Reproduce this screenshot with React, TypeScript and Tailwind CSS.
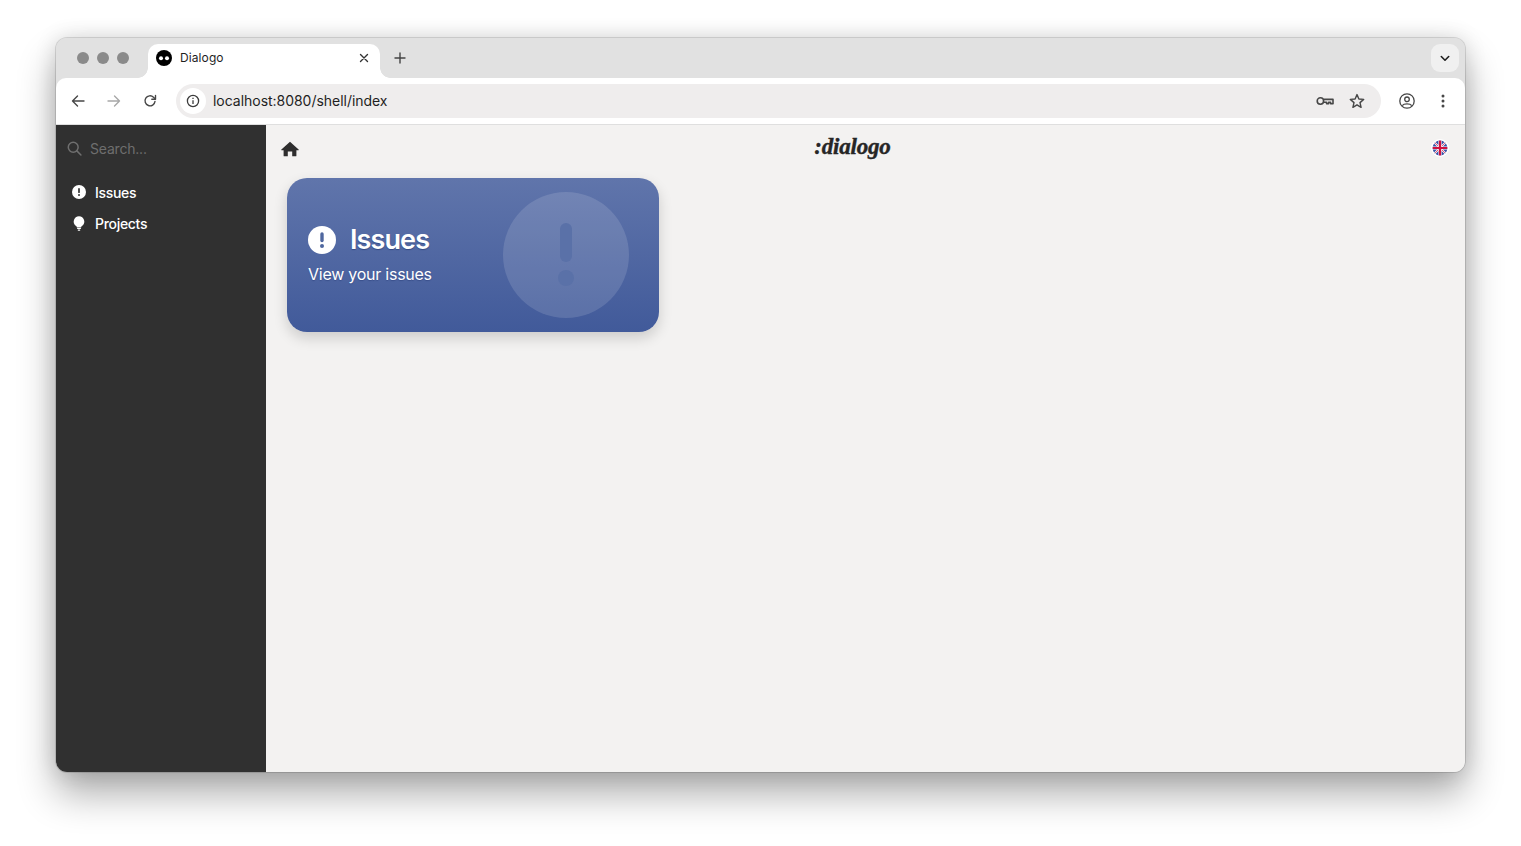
import React from "react";

function AlertCircle({ size, fg, bg }: { size: number; fg: string; bg: string }) {
  return (
    <svg width={size} height={size} viewBox="0 0 28 28" className="shrink-0">
      <circle cx="14" cy="14" r="14" fill={bg} />
      <rect x="12.3" y="6.2" width="3.4" height="10" rx="1.7" fill={fg} />
      <circle cx="14" cy="20" r="2" fill={fg} />
    </svg>
  );
}

function Favicon() {
  return (
    <svg width="16" height="16" viewBox="0 0 16 16" className="shrink-0">
      <circle cx="8" cy="8" r="8" fill="#000" />
      <circle cx="5" cy="8.2" r="2" fill="#fff" />
      <circle cx="11" cy="8.2" r="2" fill="#fff" />
    </svg>
  );
}

function Flag() {
  return (
    <svg width="18" height="18" viewBox="0 0 18 18" className="shrink-0">
      <circle cx="9" cy="9" r="9" fill="#fff" />
      <clipPath id="flag">
        <circle cx="9" cy="9" r="7.4" />
      </clipPath>
      <g clipPath="url(#flag)">
        <rect x="1" y="1" width="16" height="16" fill="#3a55a8" />
        <path d="M2 2 16 16M16 2 2 16" stroke="#fff" strokeWidth="1.8" />
        <path d="M2 2 16 16M16 2 2 16" stroke="#d8325a" strokeWidth="0.8" />
        <path d="M9 1V17M1 9H17" stroke="#fff" strokeWidth="3.2" />
        <path d="M9 1V17M1 9H17" stroke="#d0103f" strokeWidth="2.2" />
      </g>
    </svg>
  );
}

export default function App() {
  return (
    <div className="w-[1521px] h-[846px] bg-white overflow-hidden pt-[38px] pl-[56px] font-['Inter',sans-serif]">
      <div className="w-[1409px] h-[734px] rounded-[11px] overflow-hidden flex flex-col bg-[#e1e1e1] shadow-[0_0_0_1px_rgba(0,0,0,0.12),0_22px_38px_rgba(0,0,0,0.32),0_0_22px_rgba(0,0,0,0.14)]">
        {/* Tab strip */}
        <div className="h-[40px] shrink-0 flex items-start pr-[6px] bg-[#e1e1e1]">
          <div className="flex items-center gap-[8px] ml-[21px] h-[40px]">
            <span className="w-[12px] h-[12px] rounded-full bg-[#8a8a8a]" />
            <span className="w-[12px] h-[12px] rounded-full bg-[#8a8a8a]" />
            <span className="w-[12px] h-[12px] rounded-full bg-[#8a8a8a]" />
          </div>
          <div className="relative ml-[19px] mt-[6px] w-[232px] h-[34px] bg-white rounded-t-[10px] flex items-center pl-[8px] pr-[11px] pb-[6px] gap-[8px]">
            <span className="absolute -left-[10px] bottom-0 w-[10px] h-[10px] bg-[radial-gradient(circle_at_0_0,transparent_9.5px,#ffffff_10px)]" />
            <span className="absolute -right-[10px] bottom-0 w-[10px] h-[10px] bg-[radial-gradient(circle_at_100%_0,transparent_9.5px,#ffffff_10px)]" />
            <Favicon />
            <span className="text-[12px] text-[#1f1f1f] flex-1 font-['Inter',sans-serif] tracking-[0.1px]">Dialogo</span>
            <svg width="10" height="10" viewBox="0 0 10 10" fill="none" stroke="#333" strokeWidth="1.4" strokeLinecap="round">
              <path d="M1.5 1.5 8.5 8.5M8.5 1.5 1.5 8.5" />
            </svg>
          </div>
          <div className="ml-[14px] h-[40px] flex items-center">
            <svg width="12" height="12" viewBox="0 0 12 12" fill="none" stroke="#444" strokeWidth="1.4" strokeLinecap="round">
              <path d="M6 1V11M1 6H11" />
            </svg>
          </div>
          <div className="ml-auto mt-[6px] w-[28px] h-[28px] rounded-[9px] bg-[#f0f0f0] flex items-center justify-center">
            <svg width="10" height="7" viewBox="0 0 10 7" fill="none" stroke="#1f1f1f" strokeWidth="1.6" strokeLinecap="round" strokeLinejoin="round">
              <path d="M1.3 1.5 5 5.2 8.7 1.5" />
            </svg>
          </div>
        </div>

        {/* Toolbar */}
        <div className="h-[47px] shrink-0 bg-white rounded-t-[10px] border-b border-[#dfdfdf] flex items-center pl-[15px] pr-[20px]">
          <svg width="14" height="14" viewBox="0 0 14 14" fill="none" stroke="#474747" strokeWidth="1.4" strokeLinecap="round" strokeLinejoin="round">
            <path d="M13 7H1.5M6.5 2 1.5 7l5 5" />
          </svg>
          <svg className="ml-[22px]" width="14" height="14" viewBox="0 0 14 14" fill="none" stroke="#a8a8a8" strokeWidth="1.4" strokeLinecap="round" strokeLinejoin="round">
            <path d="M1 7H12.5M7.5 2l5 5-5 5" />
          </svg>
          <svg className="ml-[22px]" width="14" height="14" viewBox="0 0 14 14" fill="none" stroke="#474747" strokeWidth="1.4" strokeLinecap="round" strokeLinejoin="round">
            <path d="M12 7.4A5 5 0 1 1 10.5 3.2L12.3 5" />
            <path d="M12.5 1.4V5.2H8.8" />
          </svg>
          <div className="ml-[19px] w-[1205px] h-[34px] rounded-full bg-[#efeded] flex items-center pl-[4px] pr-[16px]">
            <div className="w-[26px] h-[26px] rounded-full bg-white flex items-center justify-center shrink-0">
              <svg width="14" height="14" viewBox="0 0 14 14" fill="none" stroke="#3c3c3c" strokeWidth="1.3">
                <circle cx="7" cy="7" r="5.6" />
                <path d="M7 6.3V10M7 3.8V5" />
              </svg>
            </div>
            <span className="ml-[7px] -mt-px text-[14px] text-[#1f1f1f] flex-1 tracking-[-0.03px]">localhost:8080/shell/index</span>
            <svg width="18" height="11" viewBox="0 0 18 11" fill="none" stroke="#474747" strokeWidth="1.6">
              <circle cx="4.4" cy="5" r="3.2" />
              <path d="M7.6 3.4H17V7.8H14.6V6.2H12.6V7.8H10.6V6.2H7.6" strokeLinejoin="round" />
            </svg>
            <svg className="ml-[15px]" width="16" height="16" viewBox="0 0 16 16" fill="none" stroke="#474747" strokeWidth="1.4" strokeLinejoin="round">
              <path d="M8 1.6 9.9 6 14.7 6.4 11 9.6 12.1 14.3 8 11.8 3.9 14.3 5 9.6 1.3 6.4 6.1 6Z" />
            </svg>
          </div>
          <svg className="ml-[18px]" width="16" height="16" viewBox="0 0 16 16" fill="none" stroke="#474747" strokeWidth="1.3">
            <circle cx="8" cy="8" r="7.2" />
            <circle cx="8" cy="6.3" r="2.3" />
            <path d="M3.2 12.6C5 10.4 11 10.4 12.8 12.6" />
          </svg>
          <svg className="ml-auto" width="4" height="14" viewBox="0 0 4 14" fill="#474747">
            <circle cx="2" cy="2" r="1.5" />
            <circle cx="2" cy="7" r="1.5" />
            <circle cx="2" cy="12" r="1.5" />
          </svg>
        </div>

        {/* Page */}
        <div className="flex-1 min-h-0 flex">
          <aside className="w-[210px] shrink-0 bg-[#303030] pt-[14px]">
            <div className="flex items-center pl-[11px] h-[18px]">
              <svg width="15" height="15" viewBox="0 0 14 14" fill="none" stroke="#6f6f6f" strokeWidth="1.4" strokeLinecap="round">
                <circle cx="5.8" cy="5.8" r="4.6" />
                <path d="M9.2 9.2 13 13" />
              </svg>
              <span className="ml-[8px] text-[14px] text-[#6e6e6e] tracking-[-0.2px]">Search...</span>
            </div>
            <nav className="mt-[25px] flex flex-col gap-[11px]">
              <div className="flex items-center h-[20px] pl-[16px]">
                <AlertCircle size={14} fg="#303030" bg="#ffffff" />
                <span className="ml-[9px] text-[14px] font-medium text-white tracking-[-0.3px]">Issues</span>
              </div>
              <div className="flex items-center h-[20px] pl-[16px]">
                <svg width="14" height="15" viewBox="0 0 14 15" fill="#fff" className="shrink-0">
                  <path d="M7 0.2a5.4 5.4 0 0 0-3 9.8c.6.4.8.8.9 1.4h4.2c.1-.6.3-1 .9-1.4A5.4 5.4 0 0 0 7 .2Z" />
                  <rect x="5" y="12" width="4" height="1.1" rx=".5" />
                  <rect x="5.7" y="13.5" width="2.6" height="1.2" rx=".6" />
                </svg>
                <span className="ml-[9px] text-[14px] font-medium text-white tracking-[-0.3px]">Projects</span>
              </div>
            </nav>
          </aside>

          <main className="flex-1 min-w-0 bg-[#f3f2f1] flex flex-col">
            <header className="h-[53px] shrink-0 flex items-start pl-[15px] pr-[16px]">
              <svg className="mt-[16px]" width="18" height="16" viewBox="0 0 18 16" fill="#2e2e2e">
                <path d="M9 .8 17.6 8.4a.5.5 0 0 1-.3.9H15.4v5.4a.6.6 0 0 1-.6.6H11.2V10.5H6.8V15.3H3.2a.6.6 0 0 1-.6-.6V9.3H.7a.5.5 0 0 1-.3-.9Z" />
              </svg>
              <div className="flex-1 flex justify-center">
                <span className="mt-[7px] mr-[25px] text-[23px] leading-[30px] font-bold italic text-[#262626] font-['Liberation_Serif',serif] tracking-[-0.2px] [-webkit-text-stroke:0.4px_#262626]">:dialogo</span>
              </div>
              <div className="mt-[14px]"><Flag /></div>
            </header>
            <div className="pl-[21px]">
              <div className="w-[372px] h-[154px] rounded-[20px] overflow-hidden flex items-center justify-between pl-[21px] pr-[30px] shadow-[0_6px_14px_rgba(0,0,0,0.16)] bg-[linear-gradient(180deg,#6075ab_0%,#415a9a_100%)]">
                <div className="-mt-[2px]">
                  <div className="flex items-center gap-[14px]">
                    <AlertCircle size={28} fg="#4f679f" bg="#ffffff" />
                    <span className="text-[27px] leading-[34px] font-semibold text-white tracking-[-0.9px] [text-shadow:0_1px_1px_rgba(40,60,120,0.7)]">Issues</span>
                  </div>
                  <p className="mt-[6px] text-[16px] leading-[22px] text-white tracking-[-0.25px] [text-shadow:0_1px_1px_rgba(40,60,120,0.5)]">View your issues</p>
                </div>
                <svg width="126" height="126" viewBox="0 0 126 126" className="shrink-0">
                  <circle cx="63" cy="63" r="63" fill="#fff" fillOpacity="0.13" />
                  <rect x="57" y="31" width="12" height="39" rx="6" fill="#5a71a8" />
                  <circle cx="63" cy="86" r="8" fill="#5a71a8" />
                </svg>
              </div>
            </div>
          </main>
        </div>
      </div>
    </div>
  );
}
